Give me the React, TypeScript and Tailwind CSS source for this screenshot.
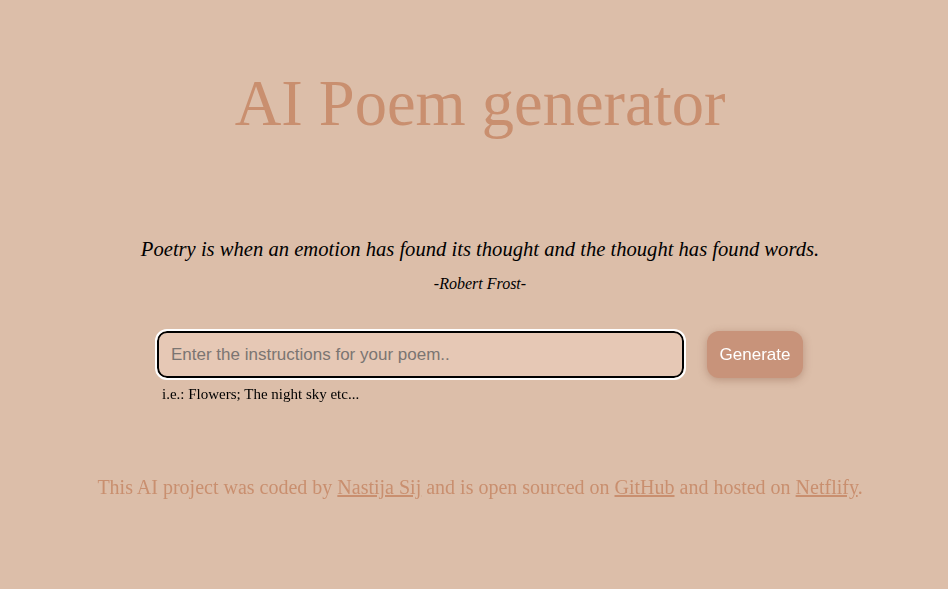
export default function App() {
  return (
    <div className="min-h-screen w-full bg-[#dcbea9] flex flex-col items-center pl-[12px]">
      <header className="pt-[68px]">
        <h1 className="font-['Liberation_Serif',serif] text-[64.5px] leading-[72px] text-[#c98f6f] text-center">
          AI Poem generator
        </h1>
      </header>

      <section className="mt-[97px] text-center font-['Liberation_Serif',serif] italic text-black">
        <p className="text-[20.6px] leading-6">
          Poetry is when an emotion has found its thought and the thought has found words.
        </p>
        <p className="mt-[13px] text-[16px] leading-5">-Robert Frost-</p>
      </section>

      <form className="mt-[37px] flex items-start gap-[23px]" onSubmit={(e) => e.preventDefault()}>
        <div className="flex flex-col">
          <input
            autoFocus
            type="text"
            placeholder="Enter the instructions for your poem.."
            className="w-[527px] h-[47px] rounded-[10px] border-2 border-black bg-[#e6c8b5] px-[12px] font-['Liberation_Sans',sans-serif] text-[17px] text-black placeholder:text-[#7b7572] outline outline-2 outline-white outline-offset-0"
          />
          <span className="mt-[6px] pl-[5px] font-['Liberation_Serif',serif] text-[15px] leading-5 text-black">
            i.e.: Flowers; The night sky etc...
          </span>
        </div>
        <button
          type="submit"
          className="h-[47px] w-[96px] rounded-[12px] bg-[#c8937a] font-['Liberation_Sans',sans-serif] text-[17px] text-white shadow-[0_2px_8px_rgba(120,70,50,0.35)]"
        >
          Generate
        </button>
      </form>

      <footer className="mt-[68px] font-['Liberation_Serif',serif] text-[20px] text-[#c98f6f] text-center">
        This AI project was coded by <a href="#" className="underline">Nastija Sij</a> and is open sourced on{" "}
        <a href="#" className="underline">GitHub</a> and hosted on <a href="#" className="underline">Netflify</a>.
      </footer>
    </div>
  )
}
